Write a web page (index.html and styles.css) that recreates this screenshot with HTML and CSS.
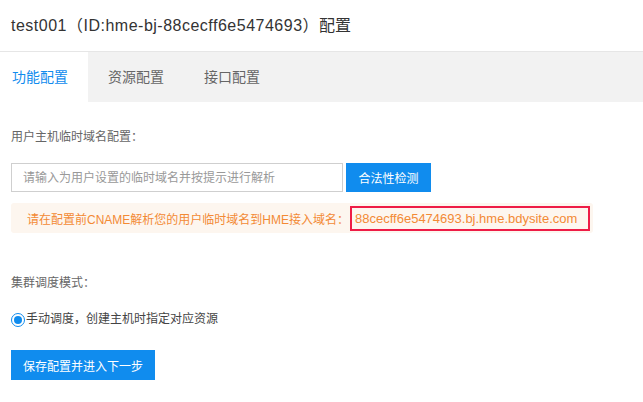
FILE: index.html
```html
<!DOCTYPE html>
<html lang="zh-CN">
<head>
<meta charset="utf-8">
<title>配置</title>
<link rel="stylesheet" href="styles.css">
</head>
<body>
<div class="page">
  <header class="title"><span class="title-id">test001（ID:hme-bj-88cecff6e5474693）</span>配置</header>
  <nav class="tabs">
    <div class="tab tab-active">功能配置</div>
    <div class="tab">资源配置</div>
    <div class="tab">接口配置</div>
  </nav>
  <main class="content">
    <div class="label label-first">用户主机临时域名配置：</div>
    <div class="input-row">
      <input class="text-input" type="text" placeholder="请输入为用户设置的临时域名并按提示进行解析">
      <button class="btn btn-check">合法性检测</button>
    </div>
    <div class="notice">
      <span class="notice-text">请在配置前CNAME解析您的用户临时域名到HME接入域名：</span>
      <span class="domain">88cecff6e5474693.bj.hme.bdysite.com</span>
    </div>
    <div class="label label-second">集群调度模式：</div>
    <label class="radio-row">
      <span class="radio"><span class="radio-dot"></span></span>
      <span class="radio-text">手动调度，创建主机时指定对应资源</span>
    </label>
    <button class="btn btn-save">保存配置并进入下一步</button>
  </main>
</div>
</body>
</html>
```
FILE: styles.css
```css
* { box-sizing: border-box; }
html, body { margin: 0; padding: 0; background: #fff; }
body {
  font-family: "Liberation Sans", "Noto Sans CJK SC", sans-serif;
  color: #333;
  width: 643px;
  height: 402px;
  overflow: hidden;
}
.title {
  height: 52px;
  line-height: 52px;
  padding-left: 11px;
  font-size: 16px;
  color: #333;
  border-bottom: 1px solid #e6e6e6;
}
.title-id { letter-spacing: 0.5px; }
.tabs {
  display: flex;
  height: 50px;
  background: #f2f2f2;
}
.tab {
  padding: 0 20px;
  line-height: 50px;
  font-size: 14px;
  color: #666;
}
.tab-active {
  background: #fff;
  color: #108cee;
  padding-left: 12px;
}
.content {
  padding: 0 11px;
  display: flex;
  flex-direction: column;
  align-items: flex-start;
}
.label {
  font-size: 12px;
  line-height: 17px;
  color: #666;
}
.label-first { margin-top: 27px; }
.input-row {
  display: flex;
  gap: 3px;
  margin-top: 17px;
}
.text-input {
  width: 332px;
  height: 29px;
  border: 1px solid #cfcfcf;
  padding: 0 11px;
  font-family: inherit;
  font-size: 12px;
  color: #333;
  outline: none;
}
.text-input::placeholder { color: #999; }
.btn {
  border: none;
  background: #108cee;
  color: #fff;
  font-family: inherit;
  font-size: 12px;
  cursor: pointer;
}
.btn-check {
  width: 85px;
  height: 29px;
}
.notice {
  margin-top: 11px;
  width: 582px;
  height: 30px;
  background: #fdf6ef;
  border-radius: 3px;
  display: flex;
  align-items: center;
  padding-left: 16px;
  font-size: 12px;
  color: #f38a35;
}
.domain {
  margin-left: 1px;
  height: 25px;
  width: 240px;
  line-height: 21px;
  border: 2px solid #ee1c46;
  padding-left: 3px;
  font-size: 13px;
}
.label-second { margin-top: 42px; }
.radio-row {
  display: flex;
  align-items: center;
  margin-top: 19px;
  font-size: 12px;
  line-height: 17px;
  color: #444;
}
.radio {
  width: 14px;
  height: 14px;
  border: 1.5px solid #108cee;
  border-radius: 50%;
  display: flex;
  align-items: center;
  justify-content: center;
  margin-right: 1px;
}
.radio-dot {
  width: 8px;
  height: 8px;
  border-radius: 50%;
  background: #108cee;
}
.btn-save {
  margin-top: 22px;
  width: 144px;
  height: 30px;
}
```
